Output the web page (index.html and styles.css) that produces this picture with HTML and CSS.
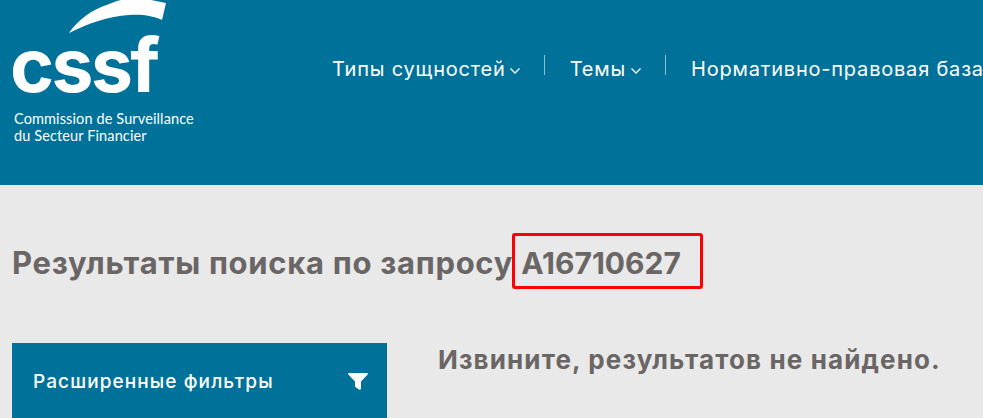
FILE: index.html
```html
<!DOCTYPE html>
<html lang="ru">
<head>
<meta charset="utf-8">
<title>CSSF</title>
<link rel="stylesheet" href="styles.css">
</head>
<body>
<header class="header">
  <a class="logo">
    <svg class="swoosh" width="100" height="36" viewBox="0 0 100 36"><path fill="#fff" d="M0 33C6 24 18 13 30 8C40 4 47 1 52 0L82 0L97 3L93 20C85 16 73 14 60 15C40 16 18 24 0 33Z"/></svg>
    <span class="logo-mark">cssf</span>
    <span class="logo-text">Commission de Surveillance<br>du Secteur Financier</span>
  </a>
  <nav class="nav">
    <a class="nav-item">Типы сущностей<svg class="chev" width="12" height="8" viewBox="0 0 12 8"><path d="M1.500 1.500L6 6L10.500 1.500" fill="none" stroke="#fff" stroke-width="1.300"/></svg></a>
    <span class="sep"></span>
    <a class="nav-item">Темы<svg class="chev" width="12" height="8" viewBox="0 0 12 8"><path d="M1.500 1.500L6 6L10.500 1.500" fill="none" stroke="#fff" stroke-width="1.300"/></svg></a>
    <span class="sep"></span>
    <a class="nav-item">Нормативно-правовая база</a>
  </nav>
</header>
<main class="main">
  <h1 class="title">Результаты поиска по запросу <span class="query">A16710627</span></h1>
  <div class="columns">
    <aside class="filter">
      <span>Расширенные фильтры</span>
      <svg width="20" height="17" viewBox="0 0 20 17"><path fill="#fff" d="M1 0H19C19.800 0 20.200 1 19.700 1.600L13 8.500V15.500C13 16.500 12 17 11.200 16.500L8 14.500C7.400 14.100 7 13.600 7 13V8.500L.3 1.600C-.2 1 .2 0 1 0Z"/></svg>
    </aside>
    <p class="empty">Извините, результатов не найдено.</p>
  </div>
</main>
</body>
</html>
```
FILE: styles.css
```css
* { box-sizing: border-box; }
html, body { margin: 0; height: 418px; overflow: hidden; }
body { width: 983px; background: #e9e9e9; font-family: Inter, "Noto Sans", sans-serif; }
.header { height: 185px; background: #007299; display: flex; align-items: flex-start; overflow: hidden; white-space: nowrap; }
.logo { position: relative; display: block; width: 332px; height: 185px; flex: none; color: #fff; }
.swoosh { position: absolute; left: 69px; top: 0; }
.logo-mark { position: absolute; left: 10px; top: 30px; font: 700 75px/70px Inter, sans-serif; letter-spacing: -2.600px; }
.logo-text { position: absolute; left: 14px; top: 110px; font: 400 14.500px/17px Lato, sans-serif; letter-spacing: .12px; }
.nav { display: flex; align-items: flex-start; padding-top: 55px; color: #fff; font-size: 20px; line-height: 28px; font-weight: 400; letter-spacing: .8px; flex: none; }
.nav-item { display: flex; align-items: center; }
.chev { margin-left: 4px; margin-top: 3px; }
.nav-item:first-child .chev { margin-left: 3px; }
.sep { width: 1px; height: 20px; background: rgba(255,255,255,.55); margin: 0 25px 0 23px; }
.main { padding: 0 12px; }
.title { margin: 58px 0 0; font-size: 31px; line-height: 40px; font-weight: 700; letter-spacing: .7px; color: #6a6665; white-space: nowrap; }
.query { display: inline-block; position: relative; font-size: 30px; letter-spacing: 0; }
.query::after { content: ""; position: absolute; left: -9px; right: -22px; top: -10px; bottom: -6px; border: 3px solid #f00; border-radius: 3px; }
.columns { display: flex; margin-top: 60px; }
.filter { width: 375px; height: 75px; flex: none; background: #007299; color: #fff; display: flex; align-items: center; justify-content: space-between; padding: 1px 19px 0 21px; font-size: 19px; font-weight: 500; letter-spacing: 1.1px; }
.empty { margin: 2px 0 0 51px; font-size: 26px; line-height: 30px; font-weight: 700; letter-spacing: 1.13px; color: #6a6665; white-space: nowrap; }
```
